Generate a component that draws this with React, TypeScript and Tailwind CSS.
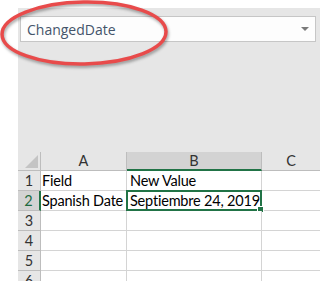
const rows = [
  { n: "1", a: "Field", b: "New Value" },
  { n: "2", a: "Spanish Date", b: "Septiembre 24, 2019" },
  { n: "3", a: "", b: "" },
  { n: "4", a: "", b: "" },
  { n: "5", a: "", b: "" },
  { n: "6", a: "", b: "" },
];

const cellFont = { fontFamily: "Lato, 'Liberation Sans', sans-serif" };

const App = () => {
  return (
    <div className="relative w-[320px] h-[281px] overflow-hidden bg-white pl-[18px] pt-[8px]">
      <div className="h-full bg-[#e6e6e6] flex flex-col">
        {/* field dropdown area */}
        <div className="h-[144px] shrink-0 pl-[2px] pt-[8px]">
          <div className="h-[26px] w-[296px] bg-[#fdfdfd] border border-[#c6c6c6] flex items-center justify-between pl-[6px] pr-[6px]">
            <span
              className="text-[14px] text-[#44546a]"
              style={{ fontFamily: "'Open Sans', 'Noto Sans', sans-serif" }}
            >
              ChangedDate
            </span>
            <span className="w-0 h-0 border-l-[4px] border-r-[4px] border-t-[4px] border-l-transparent border-r-transparent border-t-[#7a7a7a]" />
          </div>
        </div>

        {/* sheet */}
        <div className="grid grid-cols-[23px_86px_135px_1fr] text-[14.5px] text-black" style={cellFont}>
          {/* header row */}
          <div className="h-[19px] bg-[#e6e6e6] border-r border-b border-[#bdbdbd] relative">
            <svg className="absolute right-[2px] bottom-[2px]" width="13" height="13" viewBox="0 0 13 13">
              <polygon points="13,0 13,13 0,13" fill="#c4c4c4" />
            </svg>
          </div>
          <div className="h-[19px] bg-[#e6e6e6] border-r border-b border-[#bdbdbd] flex items-center justify-center text-[#333]">A</div>
          <div className="h-[19px] bg-[#d3d3d3] border-r border-[#bdbdbd] border-b-2 border-b-[#217346] flex items-center justify-center text-[#333]">B</div>
          <div className="h-[19px] bg-[#e6e6e6] border-b border-[#bdbdbd] flex items-center justify-center text-[#333]">C</div>

          {rows.map((r) => {
            const sel = r.n === "2";
            return (
              <div key={r.n} className="contents">
                <div
                  className={
                    sel
                      ? "h-[20px] bg-[#d3d3d3] border-r-2 border-r-[#217346] border-b border-b-[#bdbdbd] flex items-center justify-center text-[#1e6b41]"
                      : "h-[20px] bg-[#e6e6e6] border-r border-b border-[#bdbdbd] flex items-center justify-center text-[#333]"
                  }
                >
                  {r.n}
                </div>
                <div className="h-[20px] bg-white border-r border-b border-[#d4d4d4] flex items-center pl-[1px] whitespace-nowrap tracking-[-0.2px]">
                  {r.a}
                </div>
                <div className="relative h-[20px] bg-white border-r border-b border-[#d4d4d4] flex items-center pl-[3px] whitespace-nowrap tracking-[-0.2px]">
                  {r.b}
                  {sel && (
                    <>
                      <span className="absolute left-[-1px] top-[-1px] right-[-1px] bottom-[-1px] border-2 border-[#217346]" />
                      <span className="absolute right-[-3px] bottom-[-3px] w-[5px] h-[5px] bg-[#217346] border border-white box-content" />
                    </>
                  )}
                </div>
                <div className="h-[20px] bg-white border-b border-[#d4d4d4]" />
              </div>
            );
          })}
        </div>
      </div>

      <svg
        className="absolute left-0 top-0 pointer-events-none"
        width="175"
        height="72"
        viewBox="0 0 175 72"
        style={{ filter: "drop-shadow(1px 2px 1.5px rgba(0,0,0,0.35))" }}
      >
        <ellipse cx="84" cy="33" rx="82" ry="31" fill="none" stroke="#e84b4b" strokeWidth="3.5" transform="rotate(-1 84 33)" />
      </svg>
    </div>
  );
};

export default App;
